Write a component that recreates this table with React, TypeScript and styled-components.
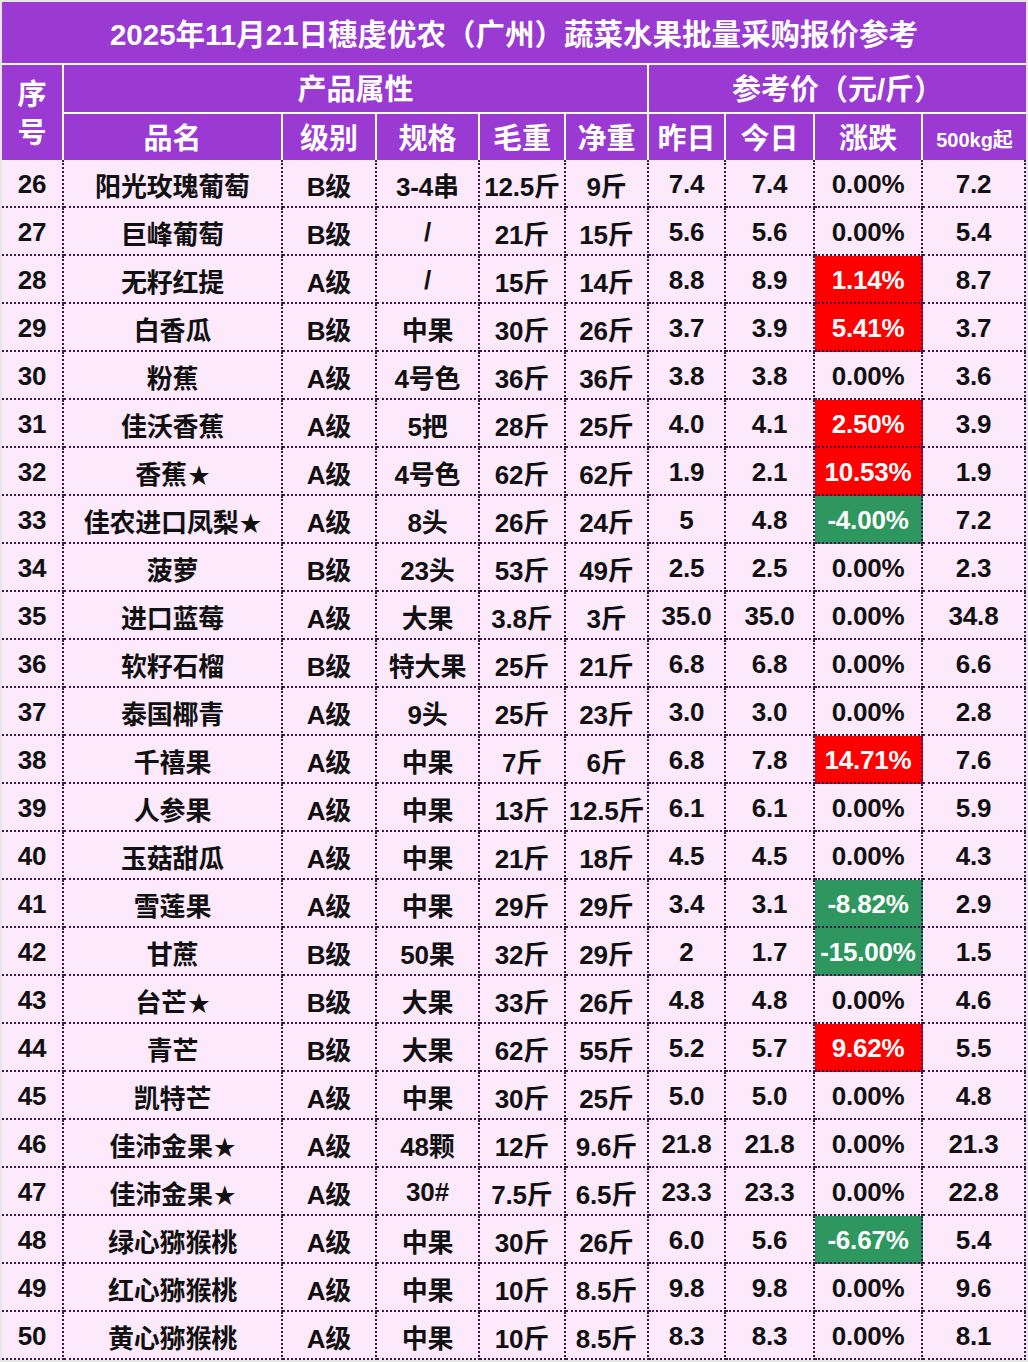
import React from "react";
import styled, { createGlobalStyle, css } from "styled-components";

const GlobalStyle = createGlobalStyle`
  html, body {
    margin: 0;
    padding: 0;
    background: #e6e6e6;
  }
  body {
    padding: 2px 0 0 2px;
    font-family: "Liberation Sans", "Noto Sans CJK SC", sans-serif;
  }
`;

const PURPLE = "#9a3ad3";
const PINK = "#fce9fc";
const DOT = "#3c1650";

const Sheet = styled.div`
  display: grid;
  width: 1024px;
  grid-template-columns: 62px 219px 94px 103px 86px 83px 77px 89px 108px 103px;
  grid-template-rows: 63px 49px 46px repeat(25, 48px);
  font-family: "Liberation Sans", "Noto Sans CJK SC", sans-serif;
  font-weight: 700;
`;

const HeadCell = styled.div<{ $span?: number; $rows?: number; $bottom?: boolean; $last?: boolean; $size?: number }>`
  box-sizing: border-box;
  background: ${PURPLE};
  color: #ffffff;
  display: flex;
  flex-direction: column;
  align-items: center;
  justify-content: center;
  padding-top: 5px;
  font-size: ${(p) => p.$size ?? 29}px;
  line-height: 1.3;
  white-space: nowrap;
  grid-column: ${(p) => (p.$span ? `span ${p.$span}` : "auto")};
  grid-row: ${(p) => (p.$rows ? `span ${p.$rows}` : "auto")};
  border-right: ${(p) => (p.$last ? "none" : "2px solid #ffffff")};
  border-bottom: ${(p) => (p.$bottom ? "2px solid #ffffff" : "none")};
`;

const TitleCell = styled(HeadCell)`
  grid-column: 1 / -1;
  font-size: 29.5px;
  padding-top: 5px;
`;

type Tone = "flat" | "up" | "down";

const DataCell = styled.div<{ $tone?: Tone }>`
  box-sizing: border-box;
  display: flex;
  align-items: center;
  justify-content: center;
  padding-top: 3px;
  white-space: nowrap;
  font-size: 26px;
  color: #111111;
  background: ${PINK};
  border-right: 2px dotted ${DOT};
  border-bottom: 2px dotted ${DOT};
  letter-spacing: -0.2px;
  ${(p) =>
    p.$tone === "up" &&
    css`
      background: #ff0000;
      color: #ffffff;
    `}
  ${(p) =>
    p.$tone === "down" &&
    css`
      background: #2e975f;
      color: #ffffff;
    `}
`;

const Star = styled.span`
  font-family: "Noto Sans CJK SC", sans-serif;
  font-size: 22px;
  margin-left: 1px;
`;

type Row = [string, string, string, string, string, string, string, string, string, string];

const rows: Row[] = [
  ["26", "阳光玫瑰葡萄", "B级", "3-4串", "12.5斤", "9斤", "7.4", "7.4", "0.00%", "7.2"],
  ["27", "巨峰葡萄", "B级", "/", "21斤", "15斤", "5.6", "5.6", "0.00%", "5.4"],
  ["28", "无籽红提", "A级", "/", "15斤", "14斤", "8.8", "8.9", "1.14%", "8.7"],
  ["29", "白香瓜", "B级", "中果", "30斤", "26斤", "3.7", "3.9", "5.41%", "3.7"],
  ["30", "粉蕉", "A级", "4号色", "36斤", "36斤", "3.8", "3.8", "0.00%", "3.6"],
  ["31", "佳沃香蕉", "A级", "5把", "28斤", "25斤", "4.0", "4.1", "2.50%", "3.9"],
  ["32", "香蕉★", "A级", "4号色", "62斤", "62斤", "1.9", "2.1", "10.53%", "1.9"],
  ["33", "佳农进口凤梨★", "A级", "8头", "26斤", "24斤", "5", "4.8", "-4.00%", "7.2"],
  ["34", "菠萝", "B级", "23头", "53斤", "49斤", "2.5", "2.5", "0.00%", "2.3"],
  ["35", "进口蓝莓", "A级", "大果", "3.8斤", "3斤", "35.0", "35.0", "0.00%", "34.8"],
  ["36", "软籽石榴", "B级", "特大果", "25斤", "21斤", "6.8", "6.8", "0.00%", "6.6"],
  ["37", "泰国椰青", "A级", "9头", "25斤", "23斤", "3.0", "3.0", "0.00%", "2.8"],
  ["38", "千禧果", "A级", "中果", "7斤", "6斤", "6.8", "7.8", "14.71%", "7.6"],
  ["39", "人参果", "A级", "中果", "13斤", "12.5斤", "6.1", "6.1", "0.00%", "5.9"],
  ["40", "玉菇甜瓜", "A级", "中果", "21斤", "18斤", "4.5", "4.5", "0.00%", "4.3"],
  ["41", "雪莲果", "A级", "中果", "29斤", "29斤", "3.4", "3.1", "-8.82%", "2.9"],
  ["42", "甘蔗", "B级", "50果", "32斤", "29斤", "2", "1.7", "-15.00%", "1.5"],
  ["43", "台芒★", "B级", "大果", "33斤", "26斤", "4.8", "4.8", "0.00%", "4.6"],
  ["44", "青芒", "B级", "大果", "62斤", "55斤", "5.2", "5.7", "9.62%", "5.5"],
  ["45", "凯特芒", "A级", "中果", "30斤", "25斤", "5.0", "5.0", "0.00%", "4.8"],
  ["46", "佳沛金果★", "A级", "48颗", "12斤", "9.6斤", "21.8", "21.8", "0.00%", "21.3"],
  ["47", "佳沛金果★", "A级", "30#", "7.5斤", "6.5斤", "23.3", "23.3", "0.00%", "22.8"],
  ["48", "绿心猕猴桃", "A级", "中果", "30斤", "26斤", "6.0", "5.6", "-6.67%", "5.4"],
  ["49", "红心猕猴桃", "A级", "中果", "10斤", "8.5斤", "9.8", "9.8", "0.00%", "9.6"],
  ["50", "黄心猕猴桃", "A级", "中果", "10斤", "8.5斤", "8.3", "8.3", "0.00%", "8.1"],
];

const toneOf = (pct: string): Tone => {
  const v = parseFloat(pct);
  if (v > 0) return "up";
  if (v < 0) return "down";
  return "flat";
};

const renderName = (name: string) => {
  if (name.endsWith("★")) {
    return (
      <>
        {name.slice(0, -1)}
        <Star>★</Star>
      </>
    );
  }
  return name;
};

export default function App() {
  return (
    <>
      <GlobalStyle />
      <Sheet>
        <TitleCell $bottom $last>
          2025年11月21日穗虔优农（广州）蔬菜水果批量采购报价参考
        </TitleCell>

        <HeadCell $rows={2}>
          <span>序</span>
          <span>号</span>
        </HeadCell>
        <HeadCell $span={5} $bottom>产品属性</HeadCell>
        <HeadCell $span={4} $bottom $last>参考价（元/斤）</HeadCell>

        <HeadCell>品名</HeadCell>
        <HeadCell>级别</HeadCell>
        <HeadCell>规格</HeadCell>
        <HeadCell>毛重</HeadCell>
        <HeadCell>净重</HeadCell>
        <HeadCell>昨日</HeadCell>
        <HeadCell>今日</HeadCell>
        <HeadCell>涨跌</HeadCell>
        <HeadCell $last $size={20}>500kg起</HeadCell>

        {rows.map((r) => (
          <React.Fragment key={r[0]}>
            <DataCell>{r[0]}</DataCell>
            <DataCell>{renderName(r[1])}</DataCell>
            <DataCell>{r[2]}</DataCell>
            <DataCell>{r[3]}</DataCell>
            <DataCell>{r[4]}</DataCell>
            <DataCell>{r[5]}</DataCell>
            <DataCell>{r[6]}</DataCell>
            <DataCell>{r[7]}</DataCell>
            <DataCell $tone={toneOf(r[8])}>{r[8]}</DataCell>
            <DataCell>{r[9]}</DataCell>
          </React.Fragment>
        ))}
      </Sheet>
    </>
  );
}
